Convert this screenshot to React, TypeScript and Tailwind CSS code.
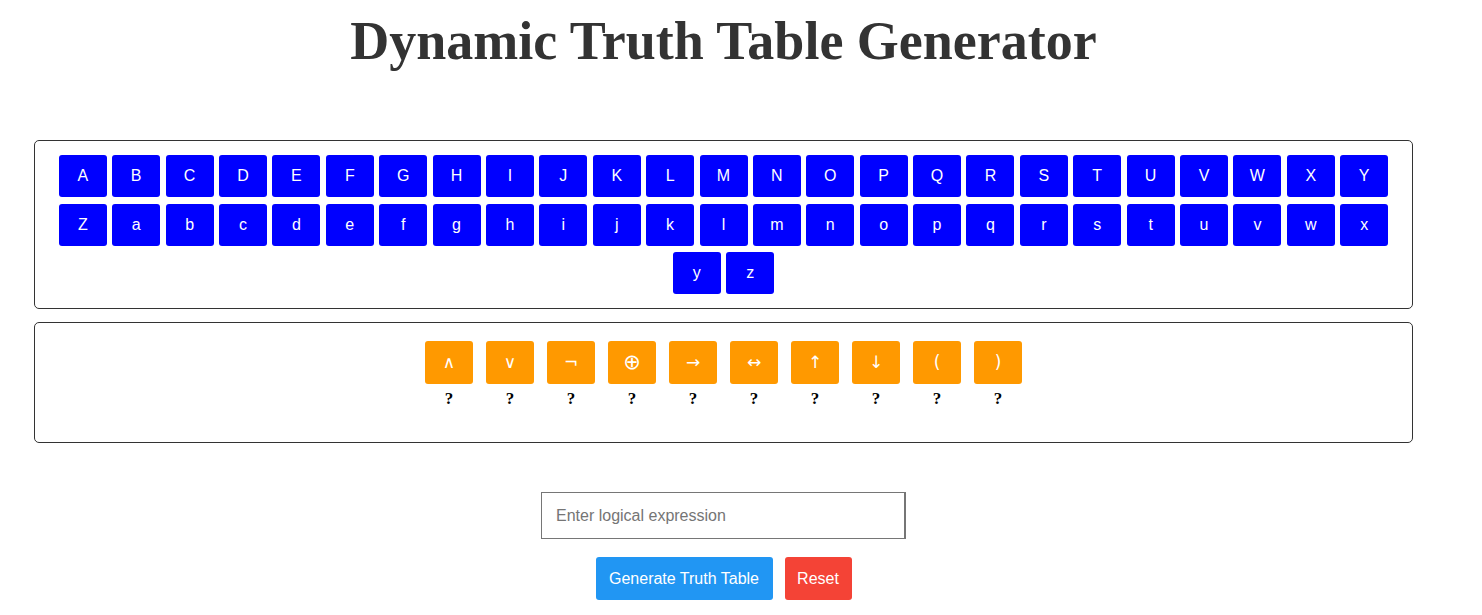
import React from 'react';

// --- Data ---

const LETTERS = [
  ...'ABCDEFGHIJKLMNOPQRSTUVWXYZ'.split(''),
  ...'abcdefghijklmnopqrstuvwxyz'.split(''),
];

const OPERATORS = ['\u2227', '\u2228', '\u00AC', '\u2295', '\u2192', '\u2194', '\u2191', '\u2193', '(', ')'];

// --- App ---

const App: React.FC = () => {
  const [expr, setExpr] = React.useState('');

  return (
    <div className="w-[1447px] bg-white pb-[15px] font-['Liberation_Sans',Arial,sans-serif]">
      <h1 className="pt-[9px] text-center font-['Liberation_Serif','Times_New_Roman',serif] text-[54px] font-bold leading-[64px] text-[#333333]">
        Dynamic Truth Table Generator
      </h1>

      {/* Variables */}
      <div className="mx-[34px] mt-[67px] rounded-[5px] border border-[#333333] px-[18px] py-[14px]">
        <div className="flex flex-wrap justify-center gap-x-[5.4px] gap-y-[6.5px]">
          {LETTERS.map((l) => (
            <button
              key={l}
              onClick={() => setExpr(expr + l)}
              className="flex h-[42px] w-[48px] items-center justify-center rounded-[3px] bg-[#0000ff] text-[16px] text-white"
            >
              {l}
            </button>
          ))}
        </div>
      </div>

      {/* Operators */}
      <div className="mx-[34px] mt-[13px] h-[121px] rounded-[5px] border border-[#333333] pt-[18px]">
        <div className="flex justify-center gap-x-[13px]">
          {OPERATORS.map((op) => (
            <div key={op} className="flex w-[48px] flex-col items-center">
              <button
                onClick={() => setExpr(expr + op)}
                className={`flex h-[43px] w-[48px] items-center justify-center rounded-[3px] bg-[#ff9900] font-['DejaVu_Sans',sans-serif] text-white ${
                  op === '\u2295' ? 'text-[21px]' : 'text-[17px]'
                }`}
              >
                {op}
              </button>
              <span className="mt-[5px] font-['Liberation_Serif','Times_New_Roman',serif] text-[17px] font-bold leading-[20px] text-black">
                ?
              </span>
            </div>
          ))}
        </div>
      </div>

      {/* Input + actions */}
      <div className="mt-[49px] flex flex-col items-center">
        <input
          value={expr}
          onChange={(e) => setExpr(e.target.value)}
          placeholder="Enter logical expression"
          className="h-[47px] w-[365px] border border-r-2 border-[#767676] px-[14px] text-[16px] text-black outline-none placeholder:text-[#757575]"
        />
        <div className="mt-[18px] flex gap-x-[12px]">
          <button className="h-[43px] w-[177px] rounded-[3px] bg-[#2196f3] text-[16px] text-white">
            Generate Truth Table
          </button>
          <button onClick={() => setExpr('')} className="h-[43px] w-[67px] rounded-[3px] bg-[#f44336] text-[16px] text-white">
            Reset
          </button>
        </div>
      </div>
    </div>
  );
};

export default App;
